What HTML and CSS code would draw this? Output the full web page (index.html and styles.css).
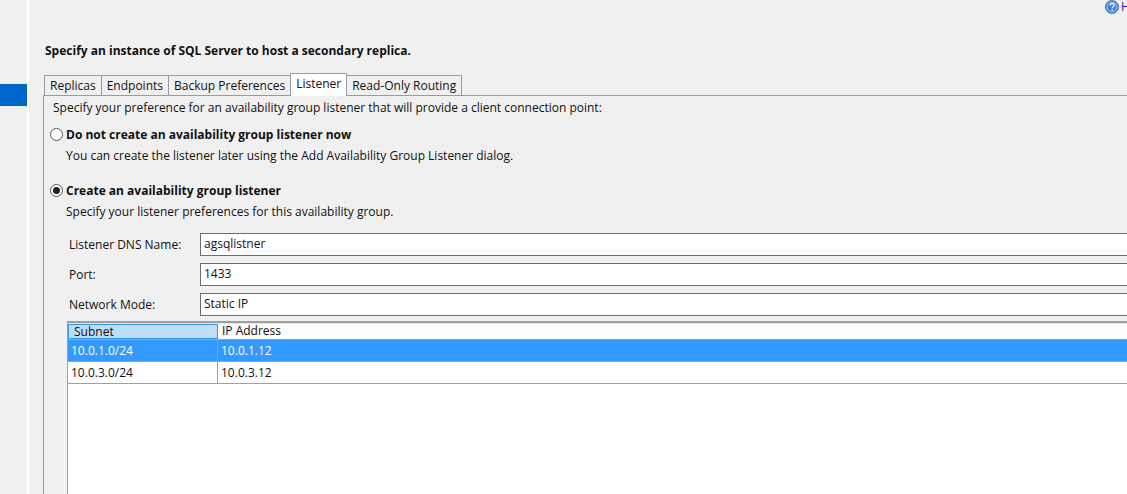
FILE: index.html
```html
<!DOCTYPE html>
<html lang="en">
<head>
<meta charset="utf-8">
<title>Specify Replicas</title>
<link rel="stylesheet" href="styles.css">
</head>
<body>
<div class="app">
  <aside class="nav"><div class="nav-selected"></div></aside>
  <main class="main">
    <div class="help">
      <svg class="help-icon" viewBox="0 0 14 14" aria-hidden="true">
        <circle cx="7" cy="7" r="6.5" fill="#2a62c4" stroke="#5c7fb8"/>
        <circle cx="7" cy="7" r="5" fill="#3f7fe0" stroke="#dfe9fb" stroke-width="0.8"/>
        <path d="M5 5.4c.2-1.2 1.1-1.7 2.1-1.7 1.2 0 2 .7 2 1.7 0 1.4-1.9 1.4-1.9 2.8" fill="none" stroke="#fff" stroke-width="1.3"/>
        <rect x="6.5" y="9.3" width="1.4" height="1.4" fill="#fff"/>
      </svg>
      <span class="help-text">H</span>
    </div>
    <h1 class="heading">Specify an instance of SQL Server to host a secondary replica.</h1>
    <div class="tabs">
      <div class="tab tab-replicas">Replicas</div>
      <div class="tab tab-endpoints">Endpoints</div>
      <div class="tab tab-backup">Backup Preferences</div>
      <div class="tab tab-active">Listener</div>
      <div class="tab tab-routing">Read-Only Routing</div>
    </div>
    <section class="panel">
      <p class="intro">Specify your preference for an availability group listener that will provide a client connection point:</p>
      <div class="option option-first">
        <span class="radio"></span>
        <div class="option-body">
          <div class="option-title">Do not create an availability group listener now</div>
          <div class="option-desc">You can create the listener later using the Add Availability Group Listener dialog.</div>
        </div>
      </div>
      <div class="option option-second">
        <span class="radio radio-on"></span>
        <div class="option-body">
          <div class="option-title">Create an availability group listener</div>
          <div class="option-desc">Specify your listener preferences for this availability group.</div>
        </div>
      </div>
      <div class="form">
        <label class="form-label">Listener DNS Name:</label><div class="field">agsqlistner</div>
        <label class="form-label">Port:</label><div class="field">1433</div>
        <label class="form-label">Network Mode:</label><div class="field">Static IP</div>
      </div>
      <div class="grid">
        <div class="grid-row grid-head">
          <div class="cell cell-a head-selected">Subnet</div>
          <div class="cell cell-b">IP Address</div>
        </div>
        <div class="grid-row row-selected">
          <div class="cell cell-a">10.0.1.0/24</div>
          <div class="cell cell-b">10.0.1.12</div>
        </div>
        <div class="grid-row">
          <div class="cell cell-a">10.0.3.0/24</div>
          <div class="cell cell-b">10.0.3.12</div>
        </div>
      </div>
    </section>
  </main>
</div>
</body>
</html>
```
FILE: styles.css
```css
* { box-sizing: border-box; }
html, body { margin: 0; height: 100%; overflow: hidden; }
body { font-family: "Open Sans", "Noto Sans", sans-serif; font-size: 12px; color: #111; background: #f0f0f0; }
.app { display: flex; width: 1127px; height: 494px; overflow: hidden; }
.nav { width: 27px; flex: none; background: #f0f0f0; padding-top: 84px; border-right: 0; }
.nav-selected { height: 22px; background: #0066cc; }
.main { width: 1100px; flex: none; margin-left: 2px; background: #f0f0f0; border-left: 0; overflow: hidden; position: relative; }
.app { background: #fff; }
.help { position: absolute; top: 0; left: 1076px; display: flex; align-items: center; gap: 2px; height: 14px; }
.help-icon { width: 14px; height: 14px; }
.help-text { color: #1a1aee; line-height: 14px; }
.heading { margin: 0; padding: 43px 0 0 16px; font-size: 12px; font-weight: 700; line-height: 16px; height: 74px; }
.tabs { display: flex; height: 21px; padding-left: 15px; align-items: flex-end; }
.tab { height: 20px; line-height: 19px; padding: 0 5px; border: 1px solid #9a9aa2; border-bottom: 0; margin-right: 0; white-space: nowrap; background: #f0f0f0; }
.tab + .tab { margin-left: -1px; }
.tab-active { height: 23px; line-height: 19px; background: #fff; position: relative; z-index: 1; margin-bottom: -1px; }
.panel { margin-left: 14px; width: 1100px; height: 400px; border: 1px solid #9a9aa2; border-right: 0; padding: 4px 0 0 9px; }
.intro { margin: 0; line-height: 16px; height: 16px; }
.option { display: flex; }
.option-first { margin-top: 11px; }
.option-second { margin-top: 19px; }
.radio { width: 13px; height: 13px; border: 1px solid #555; border-radius: 50%; background: #fff; margin: 1px 3px 0 -3px; flex: none; position: relative; }
.radio-on::after { content: ""; position: absolute; left: 2px; top: 2px; width: 7px; height: 7px; border-radius: 50%; background: #222; }
.option-body { margin-left: 0; }
.option-title { font-weight: 700; line-height: 16px; }
.option-desc { line-height: 16px; margin-top: 5px; }
.form { display: grid; grid-template-columns: 131px 1fr; row-gap: 7px; margin: 13px 0 0 16px; align-items: stretch; }
.form-label { line-height: 23px; }
.field { height: 23px; line-height: 20px; padding-left: 3px; border: 1px solid #6d6d6d; background: #fff; margin-right: -4px; }
.grid { margin: 5px 0 0 14px; height: 200px; background: #fff; border: 1px solid #a0a0a0; border-top-width: 2px; border-right: 0; }
.grid-row { display: flex; height: 22px; line-height: 21px; border-bottom: 1px solid #a0a0a0; }
.grid-head { height: 17px; line-height: 14px; background: #fcfcfc; border-top: 1px solid #e6e6e6; border-bottom: 1px solid #a0a0a0; }
.cell { flex: none; white-space: nowrap; padding-left: 3px; }
.cell-a { width: 150px; border-right: 1px solid #a0a0a0; }
.cell-b { flex: 1; }
.head-selected { background: #c0dcfb; border: 1px solid #3399dd; padding-left: 5px; }
.grid-head .cell-b { padding-left: 4px; }
.row-selected { background: #3399ff; color: #fff; }
```
